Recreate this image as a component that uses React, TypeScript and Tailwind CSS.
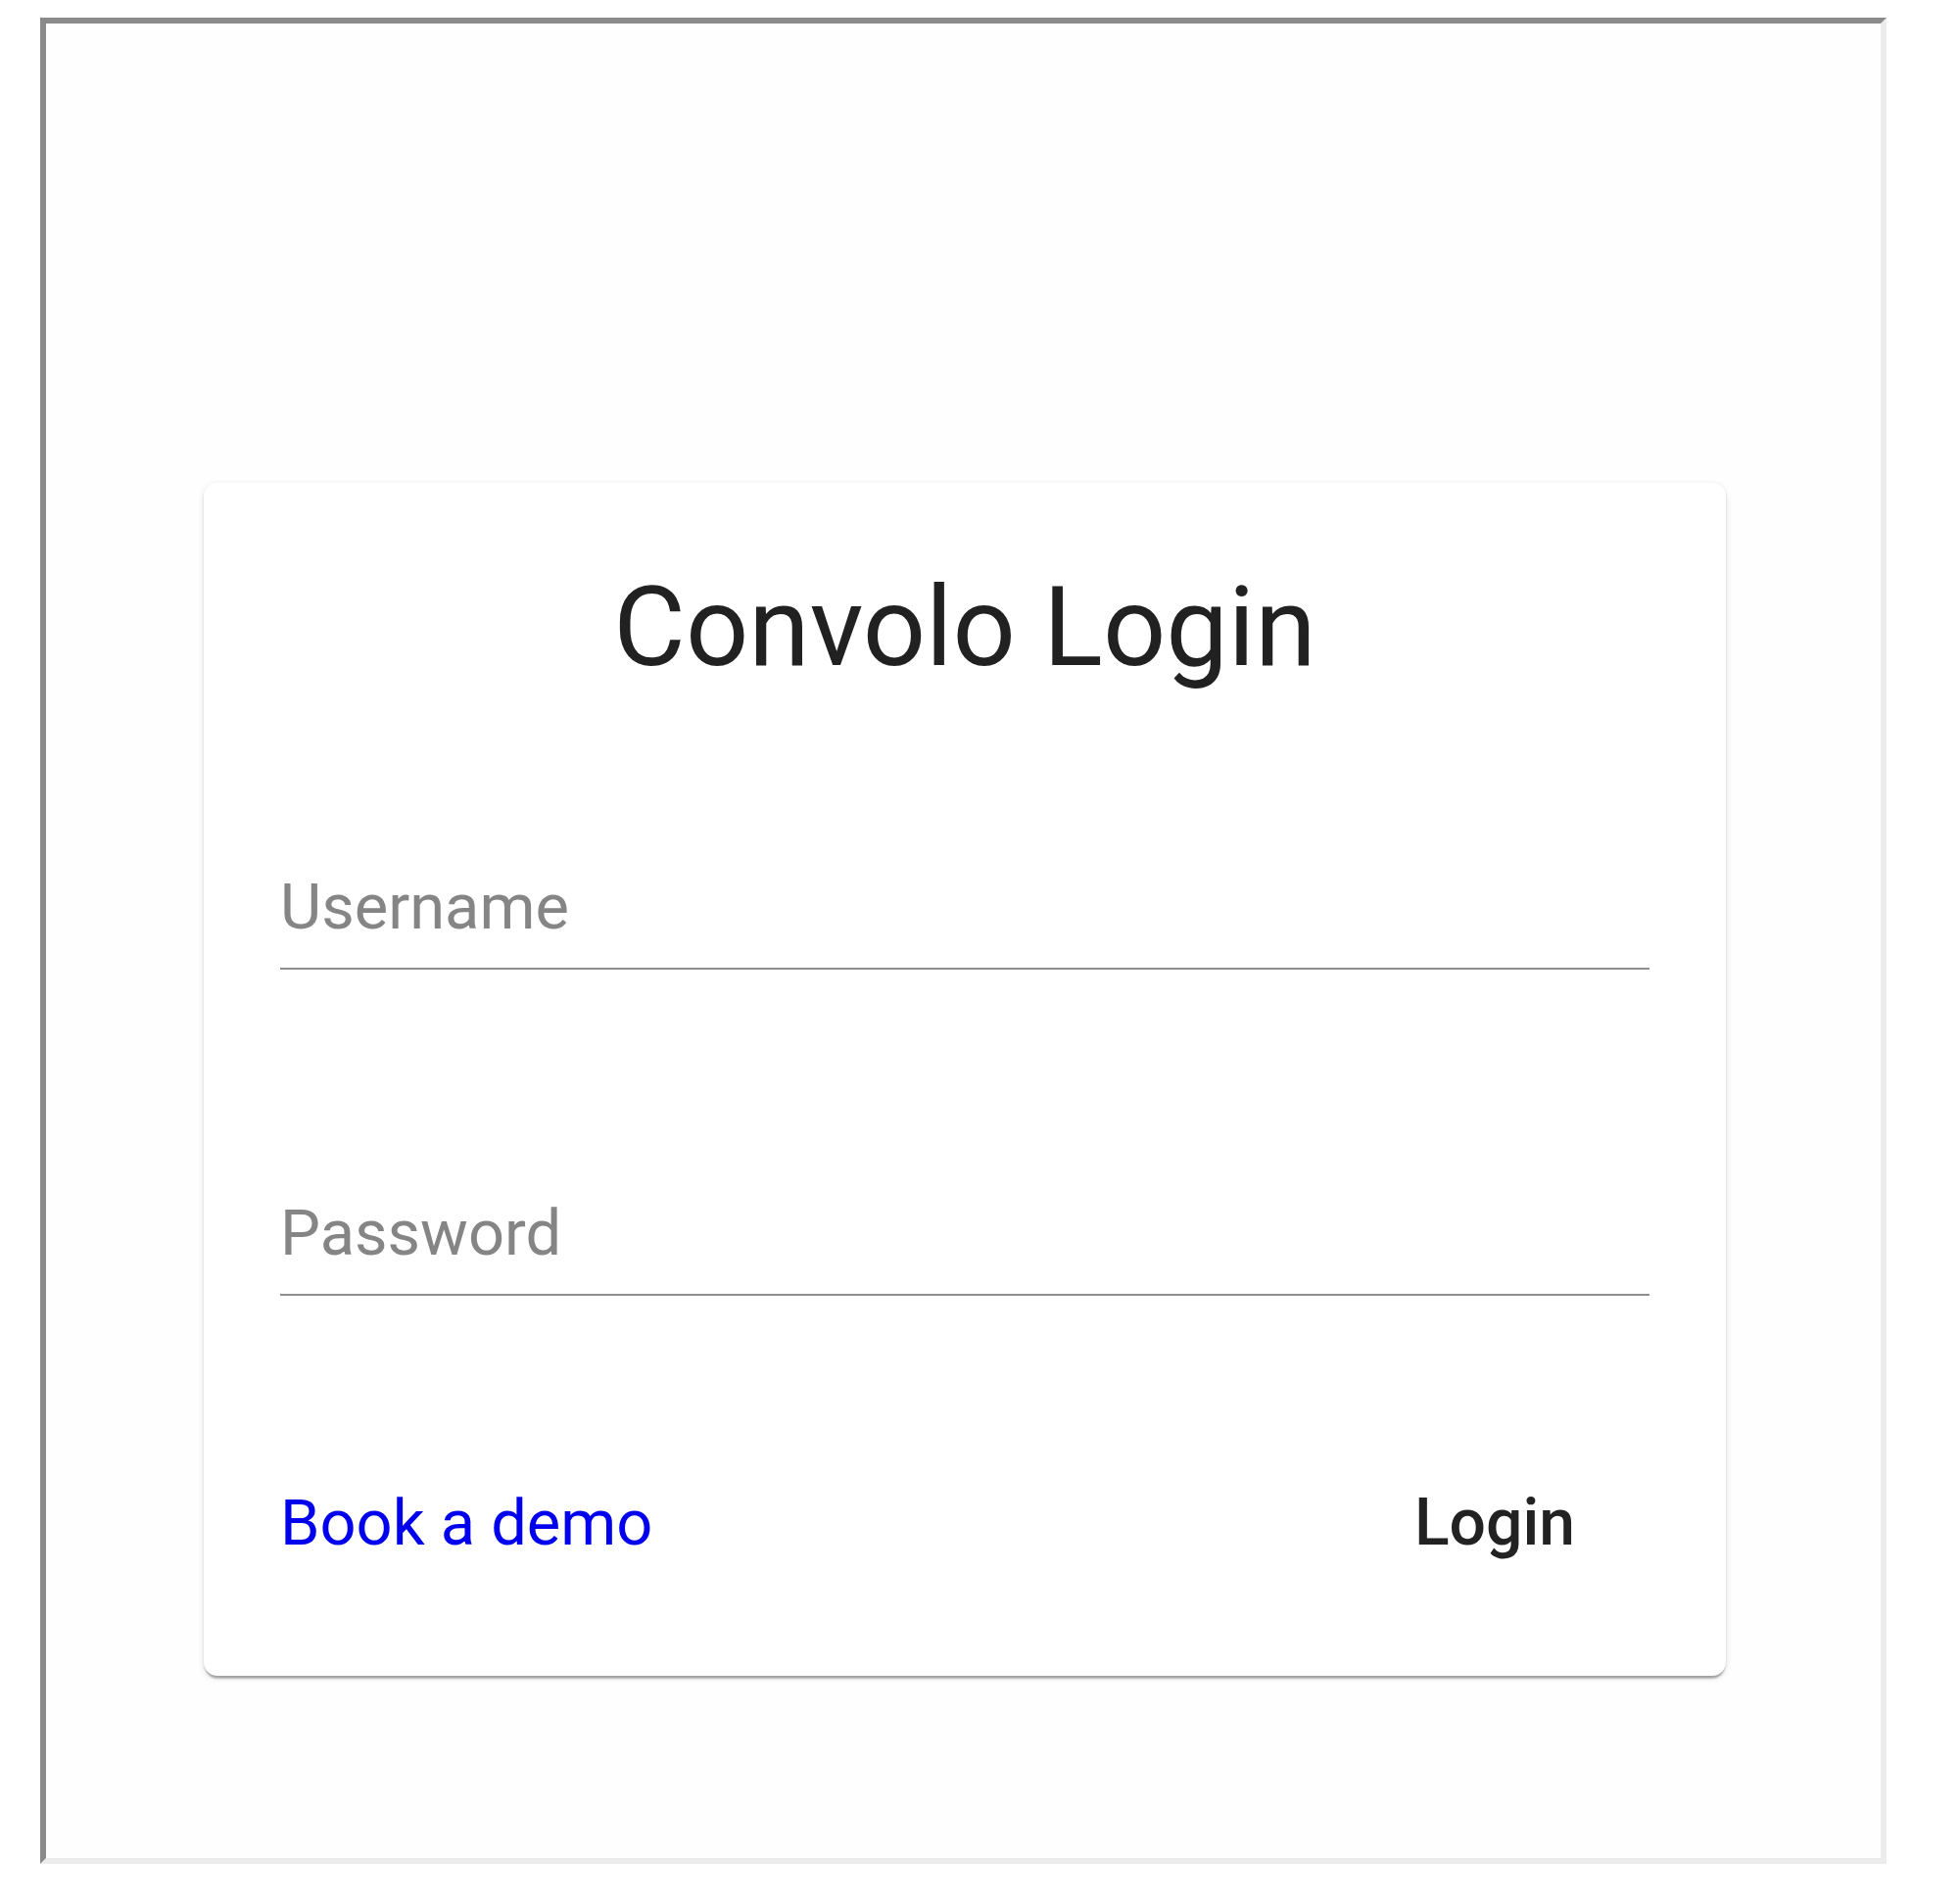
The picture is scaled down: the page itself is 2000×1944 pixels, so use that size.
import React, { useState } from 'react';

const LoginPage: React.FC = () => {
  const [username, setUsername] = useState('');
  const [password, setPassword] = useState('');

  return (
    <div className="min-h-screen bg-white font-['Roboto',sans-serif] pt-[18px] pl-[41px]">
      {/* inset frame */}
      <div className="w-[1885px] h-[1885px] bg-[#fefefe] border-[6px] border-t-[#8a8a8a] border-l-[#8a8a8a] border-r-[#ececec] border-b-[#ececec]">
        <div className="ml-[161px] mt-[469px] w-[1554px] bg-white rounded-[14px] shadow-[0_5px_2px_-2px_rgba(0,0,0,0.2),0_2px_2px_0_rgba(0,0,0,0.14),0_2px_7px_0_rgba(0,0,0,0.12)] px-[78px] pt-[80px] pb-[116px]">
          <h1 className="text-center text-[113px] leading-[136px] font-normal text-[#212121]">
            Convolo Login
          </h1>

          <div className="mt-[177px] border-b-2 border-[#8e8e8e] pb-[22px]">
            <input
              type="text"
              value={username}
              onChange={(e) => setUsername(e.target.value)}
              placeholder="Username"
              className="w-full bg-transparent outline-none text-[65px] leading-[80px] h-[80px] text-[#212121] placeholder:text-[#858585]"
            />
          </div>

          <div className="mt-[229px] border-b-2 border-[#8e8e8e] pb-[22px]">
            <input
              type="password"
              value={password}
              onChange={(e) => setPassword(e.target.value)}
              placeholder="Password"
              className="w-full bg-transparent outline-none text-[65px] leading-[80px] h-[80px] text-[#212121] placeholder:text-[#858585]"
            />
          </div>

          <div className="mt-[192px] flex items-center justify-between">
            <a href="#" className="text-[65px] leading-[80px] text-[#0000ee]">
              Book a demo
            </a>
            <button className="text-[66px] leading-[80px] font-medium text-[#222222] pr-[76px]">
              Login
            </button>
          </div>
        </div>
      </div>
    </div>
  );
};

export default LoginPage;
